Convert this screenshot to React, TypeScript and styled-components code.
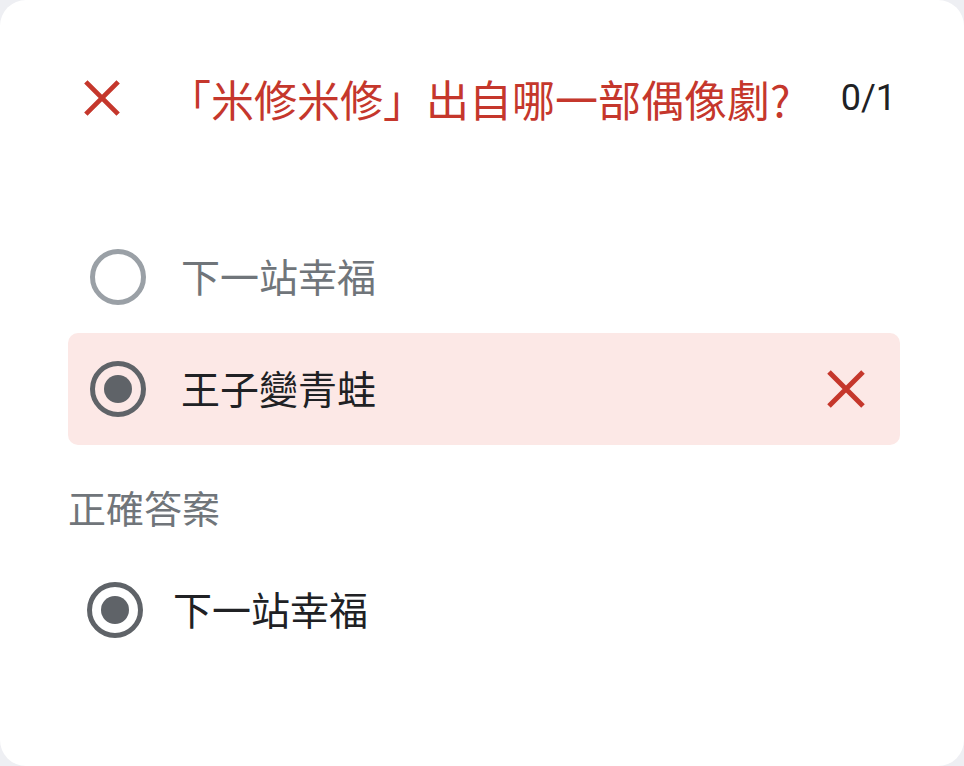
import React from "react";
import styled, { createGlobalStyle } from "styled-components";

const Global = createGlobalStyle`
  html, body { margin: 0; padding: 0; background: #eeeff3; }
  body { font-family: "Noto Sans CJK TC", "Noto Sans", Roboto, sans-serif; }
`;

const Card = styled.div`
  width: 964px;
  height: 766px;
  box-sizing: border-box;
  background: #ffffff;
  border-radius: 26px;
  padding: 0 64px 0 68px;
  display: flex;
  flex-direction: column;
  overflow: hidden;
`;

const Header = styled.div`
  margin-top: 60px;
  height: 76px;
  padding-left: 15px;
  display: flex;
  align-items: center;
`;

const Title = styled.div`
  flex: 1;
  margin-left: 47px;
  font-size: 43px;
  line-height: 48px;
  color: #c5372c;
  white-space: nowrap;
`;

const Score = styled.div`
  margin-right: 4px;
  font-family: Roboto, "Noto Sans", sans-serif;
  font-size: 36px;
  line-height: 48px;
  color: #202124;
`;

const Options = styled.div`
  margin-top: 85px;
  display: flex;
  flex-direction: column;
`;

const Row = styled.div<{ $wrong?: boolean; $indent: number; $gap: number }>`
  height: 112px;
  box-sizing: border-box;
  padding-left: ${(p) => p.$indent}px;
  padding-right: 34px;
  display: flex;
  align-items: center;
  gap: ${(p) => p.$gap}px;
  border-radius: 10px;
  background: ${(p) => (p.$wrong ? "#fce8e6" : "transparent")};
`;

const Radio = styled.div<{ $checked?: boolean }>`
  width: 56px;
  height: 56px;
  box-sizing: border-box;
  border-radius: 50%;
  border: 5.5px solid ${(p) => (p.$checked ? "#5f6368" : "#9aa0a6")};
  display: flex;
  align-items: center;
  justify-content: center;
  flex-shrink: 0;
`;

const Dot = styled.div`
  width: 28px;
  height: 28px;
  border-radius: 50%;
  background: #5f6368;
`;

const OptionText = styled.div<{ $muted?: boolean }>`
  flex: 1;
  font-size: 39px;
  line-height: 48px;
  padding-bottom: 4px;
  color: ${(p) => (p.$muted ? "#70757a" : "#202124")};
`;

const Label = styled.div`
  margin-top: 40px;
  font-size: 38px;
  line-height: 44px;
  color: #70757a;
`;

const CorrectWrap = styled.div`
  margin-top: 25px;
`;

const Cross = ({ size }: { size: number }) => (
  <svg width={size} height={size} viewBox="0 0 40 40" style={{ flexShrink: 0 }}>
    <path d="M3 3 L37 37 M37 3 L3 37" stroke="#c5372c" strokeWidth="5" strokeLinecap="butt" fill="none" />
  </svg>
);

export default function App() {
  return (
    <>
      <Global />
      <Card>
        <Header>
          <Cross size={38} />
          <Title>「米修米修」出自哪一部偶像劇?</Title>
          <Score>0/1</Score>
        </Header>
        <Options>
          <Row $indent={22} $gap={35}>
            <Radio />
            <OptionText $muted>下一站幸福</OptionText>
          </Row>
          <Row $wrong $indent={22} $gap={35}>
            <Radio $checked>
              <Dot />
            </Radio>
            <OptionText>王子變青蛙</OptionText>
            <Cross size={40} />
          </Row>
        </Options>
        <Label>正確答案</Label>
        <CorrectWrap>
          <Row $indent={19} $gap={30}>
            <Radio $checked>
              <Dot />
            </Radio>
            <OptionText>下一站幸福</OptionText>
          </Row>
        </CorrectWrap>
      </Card>
    </>
  );
}
